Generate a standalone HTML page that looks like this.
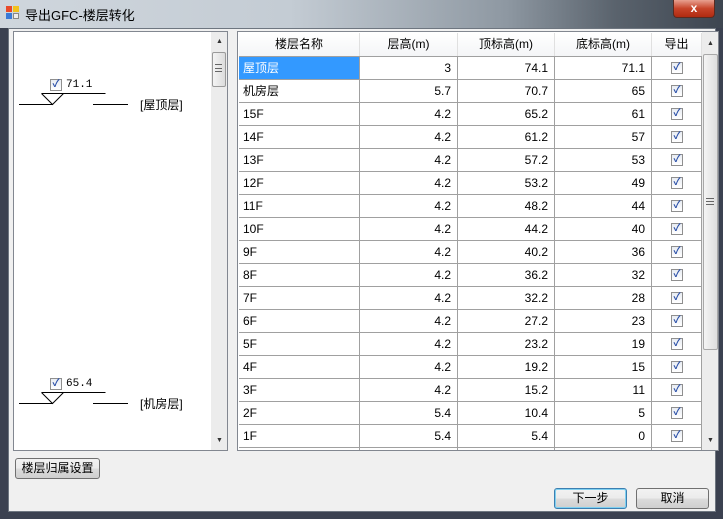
<!DOCTYPE html>
<html><head><meta charset="utf-8"><style>
*{margin:0;padding:0;box-sizing:border-box}
body{width:723px;height:519px;overflow:hidden;position:relative;background:#3b4150;font-family:"Liberation Sans","Noto Sans CJK SC",sans-serif;font-size:12px;color:#000}
.abs{position:absolute}
.title{left:0;top:0;width:723px;height:28px;background:linear-gradient(90deg,#cfd6dd 0%,#c4ccd4 40%,#8e98a2 70%,#5a636d 85%,#3d4550 100%)}
.client{left:8px;top:28px;width:708px;height:484px;background:#f0f0f0;border:1px solid #6e7680}
.cb{width:12px;height:12px;border:1px solid #8f8f8f;background:linear-gradient(#e8ecf2,#fff);font-size:10px;line-height:10px;text-align:center;color:#2a4fa8;font-weight:bold}
.sb{background:#ececec}
.row{position:absolute;left:0;height:23px;border-bottom:1px solid #a0a0a0;width:463px}
.cell{position:absolute;top:0;height:22px;line-height:22px;border-right:1px solid #a0a0a0;padding:0 4px;font-size:12px}
.r{text-align:right;padding-right:6px}
.btn{border:1px solid #707070;border-radius:3px;background:linear-gradient(#f2f2f2 0%,#ebebeb 50%,#dcdcdc 51%,#cfcfcf 100%);text-align:center;font-size:12px}
</style></head><body>
<div class="abs title"></div>
<div class="abs" style="left:6px;top:6px;width:14px;height:14px">
 <div class="abs" style="left:0;top:0;width:6px;height:6px;background:#e84a2a"></div>
 <div class="abs" style="left:7px;top:0;width:6px;height:6px;background:#f2c21c"></div>
 <div class="abs" style="left:0;top:7px;width:6px;height:6px;background:#3a7ad8"></div>
 <div class="abs" style="left:7px;top:7px;width:6px;height:6px;background:#eee;border:1px solid #888"></div>
</div>
<div class="abs" style="left:25px;top:5px;font-size:13px;color:#000">导出GFC-楼层转化</div>
<div class="abs" style="left:673px;top:0;width:42px;height:18px;background:linear-gradient(#e8a090,#c7442a 50%,#b02a10);border:1px solid #5a2a20;border-top:none;border-radius:0 0 4px 4px;color:#fff;text-align:center;font-weight:bold;font-size:12px;line-height:17px">x</div>
<div class="abs client"></div>

<!-- left panel -->
<div class="abs" style="left:13px;top:31px;width:215px;height:420px;background:#fff;border:1px solid #828790"></div>
<div class="abs sb" style="left:211px;top:32px;width:16px;height:418px"></div>
<div class="abs" style="left:216px;top:38px;font-size:7px;color:#333">▲</div>
<div class="abs" style="left:216px;top:437px;font-size:7px;color:#333">▼</div>
<div class="abs" style="left:212px;top:52px;width:14px;height:35px;border:1px solid #9a9a9a;border-radius:2px;background:linear-gradient(90deg,#f4f4f4,#dcdcdc)"></div>
<div class="abs" style="left:215px;top:64px;width:7px;height:8px;border-top:1px solid #666;border-bottom:1px solid #666"></div>
<div class="abs" style="left:215px;top:68px;width:7px;height:1px;background:#666"></div>

<svg class="abs" style="left:0;top:0" width="230" height="450">
<g stroke="#000" stroke-width="1" fill="none">
<path d="M41.5 93.5H105.5M19 104.5H53M93 104.5H128M41.5 93.5L52.5 104.5L63.5 93.5"/>
<path d="M41.5 392.5H105.5M19 403.5H53M93 403.5H128M41.5 392.5L52.5 403.5L63.5 392.5"/>
</g></svg>
<div class="abs cb" style="left:50px;top:79px">✓</div>
<div class="abs" style="left:66px;top:79px;font-family:'Liberation Mono',monospace;font-size:11px">71.1</div>
<div class="abs" style="left:140px;top:96px;font-size:12px">[屋顶层]</div>
<div class="abs cb" style="left:50px;top:378px">✓</div>
<div class="abs" style="left:66px;top:378px;font-family:'Liberation Mono',monospace;font-size:11px">65.4</div>
<div class="abs" style="left:140px;top:395px;font-size:12px">[机房层]</div>

<div class="abs btn" style="left:15px;top:458px;width:85px;height:21px;line-height:19px">楼层归属设置</div>
<div class="abs btn" style="left:554px;top:488px;width:73px;height:21px;line-height:19px;border-color:#3c7fb1;box-shadow:inset 0 0 0 1px #7fd0f0">下一步</div>
<div class="abs btn" style="left:636px;top:488px;width:73px;height:21px;line-height:19px">取消</div>

<!-- grid -->
<div class="abs" style="left:237px;top:31px;width:482px;height:420px;background:#fff;border:1px solid #828790;overflow:hidden">
 <div class="abs" style="left:1px;top:1px;width:463px;height:24px;background:linear-gradient(#fff,#f4f5f7);border-bottom:1px solid #a0a0a0">
  <div class="cell" style="left:0;width:121px;text-align:center;height:23px;border-color:#e0e0e0">楼层名称</div>
  <div class="cell" style="left:121px;width:98px;text-align:center;height:23px;border-color:#e0e0e0">层高(m)</div>
  <div class="cell" style="left:219px;width:97px;text-align:center;height:23px;border-color:#e0e0e0">顶标高(m)</div>
  <div class="cell" style="left:316px;width:97px;text-align:center;height:23px;border-color:#e0e0e0">底标高(m)</div>
  <div class="cell" style="left:413px;width:50px;text-align:center;height:23px;border-color:#e0e0e0">导出</div>
 </div>
 <div id="rows" class="abs" style="left:1px;top:25px;width:463px;height:420px"></div>
 <div class="abs sb" style="left:464px;top:0;width:17px;height:418px"></div>
 <div class="abs" style="left:469px;top:8px;font-size:7px;color:#333">▲</div>
 <div class="abs" style="left:469px;top:405px;font-size:7px;color:#333">▼</div>
 <div class="abs" style="left:465px;top:22px;width:15px;height:296px;border:1px solid #a8a8a8;border-radius:2px;background:linear-gradient(90deg,#f4f4f4,#dedede)"></div>
 <div class="abs" style="left:468px;top:166px;width:8px;height:7px;border-top:1px solid #666;border-bottom:1px solid #666"></div>
 <div class="abs" style="left:468px;top:169px;width:8px;height:1px;background:#666"></div>
</div>
<script>
var d=[["屋顶层",3,74.1,71.1],["机房层",5.7,70.7,65],["15F",4.2,65.2,61],["14F",4.2,61.2,57],["13F",4.2,57.2,53],["12F",4.2,53.2,49],["11F",4.2,48.2,44],["10F",4.2,44.2,40],["9F",4.2,40.2,36],["8F",4.2,36.2,32],["7F",4.2,32.2,28],["6F",4.2,27.2,23],["5F",4.2,23.2,19],["4F",4.2,19.2,15],["3F",4.2,15.2,11],["2F",5.4,10.4,5],["1F",5.4,5.4,0],["",""," ",""]];
var h="";
d.forEach(function(r,i){
 var sel=i==0?'background:#3399ff;color:#fff;':'';
 h+='<div class="row" style="top:'+(i*23)+'px"><div class="cell" style="left:0;width:121px;'+sel+'">'+r[0]+'</div><div class="cell r" style="left:121px;width:98px">'+r[1]+'</div><div class="cell r" style="left:219px;width:97px">'+r[2]+'</div><div class="cell r" style="left:316px;width:97px">'+r[3]+'</div><div class="cell" style="left:413px;width:50px">'+(r[0]?'<div class="cb" style="position:absolute;left:19px;top:5px">✓</div>':'')+'</div></div>';
});
document.getElementById("rows").innerHTML=h;
</script>
</body></html>
